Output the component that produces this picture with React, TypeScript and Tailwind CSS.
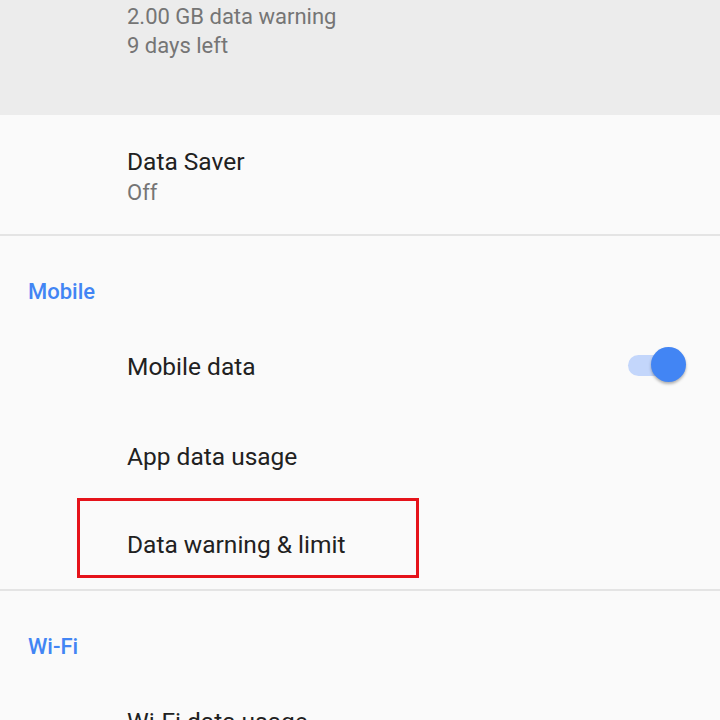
import React from 'react';

function Row({ title, children }: { title: string; children?: React.ReactNode }) {
  return (
    <div className="relative h-[90px] flex items-center pl-[127px] pr-[34px] pt-[4px]">
      <span className="flex-1 text-[24.5px] text-[#212121]">{title}</span>
      {children}
    </div>
  );
}

function Header({ label }: { label: string }) {
  return (
    <div className="h-[84px] flex items-end pb-[12px] pl-[28px]">
      <span className="text-[22px] font-medium text-[#4285f4]">{label}</span>
    </div>
  );
}

function Toggle() {
  return (
    <div className="relative w-[58px] h-[36px] flex items-center -mt-[4px]">
      <div className="w-[52px] h-[21px] rounded-full bg-[#c3d6fb]" />
      <div className="absolute right-0 top-0 w-[35px] h-[35px] rounded-full bg-[#4285f4] shadow-[0_2px_3px_rgba(0,0,0,0.3)]" />
    </div>
  );
}

export default function App() {
  return (
    <div className="w-[720px] h-[720px] overflow-hidden bg-[#fafafa]" style={{ fontFamily: 'Roboto, "Noto Sans", sans-serif' }}>
      {/* usage summary */}
      <div className="h-[115px] bg-[#ececec] pl-[127px] pt-[2px] text-[22px] leading-[29px] text-[#757575]">
        <div>2.00 GB data warning</div>
        <div>9 days left</div>
      </div>

      <div className="h-[121px] flex flex-col justify-center pl-[127px] pt-[4px] border-b-2 border-[#e4e4e4]">
        <span className="text-[24.5px] leading-[31px] text-[#212121]">Data Saver</span>
        <span className="text-[22px] leading-[31px] text-[#757575]">Off</span>
      </div>

      <Header label="Mobile" />
      <Row title="Mobile data">
        <Toggle />
      </Row>
      <Row title="App data usage" />
      <div className="relative h-[91px] flex items-center pl-[127px] pt-[2px] border-b-2 border-[#e4e4e4]">
        <span className="text-[24.5px] text-[#212121]">Data warning &amp; limit</span>
        <div className="absolute left-[77px] top-[-2px] w-[342px] h-[80px] border-[3px] border-[#e5131a]" />
      </div>

      <Header label="Wi-Fi" />
      <Row title="Wi-Fi data usage" />
    </div>
  );
}
